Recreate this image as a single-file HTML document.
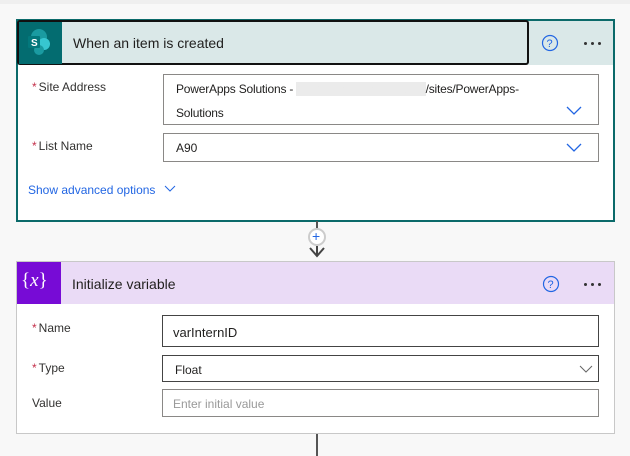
<!DOCTYPE html>
<html><head><style>
body{margin:0;width:630px;height:456px;background:#f8f8f8;font-family:"Liberation Sans",sans-serif;position:relative;overflow:hidden}
.a{position:absolute}
.lbl{font-size:12px;color:#323130}
.lbl b{color:#c4314b;font-weight:normal;margin-right:2px}
.inp{position:absolute;background:#fff;border:1px solid #8a8886;box-sizing:border-box;font-size:12px;color:#201f1e}
.dots{position:absolute;font-size:0}
.dots i{display:inline-block;width:3px;height:3px;border-radius:50%;background:#333;margin-right:4px}
</style></head><body>
<div class="a" style="left:0;top:0;width:630px;height:4px;background:#efefef"></div>
<!-- card1 -->
<div class="a" style="left:16px;top:19px;width:599px;height:203px;border:2px solid #0b6a6a;box-sizing:border-box;background:#fff"></div>
<div class="a" style="left:18px;top:21px;width:595px;height:44px;background:#dae8e8"></div>
<div class="a" style="left:17px;top:20px;width:512px;height:45px;border:2px solid #111;border-radius:3px;box-sizing:border-box;background:#dae8e8"></div>
<div class="a" style="left:19px;top:22px;width:43px;height:42px;background:#036c70"></div>
<svg class="a" style="left:26px;top:28px" width="26" height="30" viewBox="0 0 26 30"><circle cx="13" cy="9" r="8" fill="#1a9ba1"/><circle cx="18" cy="16" r="6" fill="#37c6d0"/><circle cx="13" cy="22" r="5" fill="#1a9ba1"/><rect x="2" y="8" width="12" height="12" rx="1" fill="#03787c"/><text x="5" y="18" font-size="10" font-weight="bold" fill="#fff" font-family="Liberation Sans">S</text></svg>
<div class="a" style="left:73px;top:35px;font-size:14px;color:#201f1e">When an item is created</div>
<svg class="a" style="left:541px;top:34px" width="18" height="18"><circle cx="9" cy="9" r="7.5" fill="none" stroke="#2266e3" stroke-width="1.2"/><text x="5.5" y="13" font-size="11" fill="#2266e3" font-family="Liberation Sans">?</text></svg>
<div class="dots" style="left:584px;top:42px"><i></i><i></i><i></i></div>
<div class="a lbl" style="left:32px;top:80px"><b>*</b>Site Address</div>
<div class="inp" style="left:163px;top:74px;width:436px;height:51px;padding:2px 0 0 12px;line-height:24px;font-size:12px;letter-spacing:-0.2px">PowerApps Solutions - <span style="background:#ebebeb;color:#ebebeb">https://xxxxxxxxxxxx.com</span>/sites/PowerApps-<br>Solutions</div>
<svg class="a" style="left:566px;top:106px" width="16" height="10"><path d="M1 1L8 8L15 1" fill="none" stroke="#2266e3" stroke-width="1.3"/></svg>
<div class="a lbl" style="left:32px;top:139px"><b>*</b>List Name</div>
<div class="inp" style="left:163px;top:133px;width:436px;height:29px;padding:7px 0 0 12px">A90</div>
<svg class="a" style="left:566px;top:143px" width="16" height="10"><path d="M1 1L8 8L15 1" fill="none" stroke="#2266e3" stroke-width="1.3"/></svg>
<div class="a" style="left:28px;top:183px;font-size:12px;color:#2266e3">Show advanced options</div>
<svg class="a" style="left:164px;top:185px" width="12" height="8"><path d="M1 1L6 6L11 1" fill="none" stroke="#2266e3" stroke-width="1"/></svg>
<!-- connector -->
<div class="a" style="left:316px;top:221px;width:2px;height:8px;background:#555"></div>
<div class="a" style="left:308px;top:228px;width:18px;height:18px;border:2px solid #ccc;border-radius:50%;background:#fff;box-sizing:border-box"></div>
<div class="a" style="left:312px;top:228px;font-size:14px;color:#2266e3">+</div>
<svg class="a" style="left:308px;top:245px" width="18" height="14"><path d="M2 3L9 11L16 3M9 1V11" fill="none" stroke="#444" stroke-width="2"/></svg>
<!-- card2 -->
<div class="a" style="left:16px;top:261px;width:599px;height:173px;border:1px solid #c8c8c8;box-sizing:border-box;background:#fff"></div>
<div class="a" style="left:17px;top:262px;width:597px;height:42px;background:#eadbf6"></div>
<div class="a" style="left:17px;top:262px;width:44px;height:42px;background:#770bd6"></div>
<div class="a" style="left:21px;top:270px;font-size:19px;color:#fff;font-family:'Liberation Serif',serif">{<i>x</i>}</div>
<div class="a" style="left:72px;top:276px;font-size:14px;color:#201f1e">Initialize variable</div>
<svg class="a" style="left:542px;top:275px" width="18" height="18"><circle cx="9" cy="9" r="7.5" fill="none" stroke="#2266e3" stroke-width="1.2"/><text x="5.5" y="13" font-size="11" fill="#2266e3" font-family="Liberation Sans">?</text></svg>
<div class="dots" style="left:584px;top:283px"><i></i><i></i><i></i></div>
<div class="a lbl" style="left:32px;top:321px"><b>*</b>Name</div>
<div class="inp" style="left:162px;top:315px;width:437px;height:32px;border-color:#444;padding:9px 0 0 10px;font-size:13px">varInternID</div>
<div class="a lbl" style="left:32px;top:361px"><b>*</b>Type</div>
<div class="inp" style="left:162px;top:355px;width:437px;height:27px;border-color:#444;padding:7px 0 0 12px">Float</div>
<svg class="a" style="left:579px;top:365px" width="14" height="9"><path d="M1 1L7 7L13 1" fill="none" stroke="#666" stroke-width="1"/></svg>
<div class="a lbl" style="left:32px;top:396px">Value</div>
<div class="inp" style="left:162px;top:389px;width:437px;height:28px;padding:7px 0 0 10px;color:#999">Enter initial value</div>
<div class="a" style="left:316px;top:434px;width:2px;height:22px;background:#555"></div>
</body></html>
